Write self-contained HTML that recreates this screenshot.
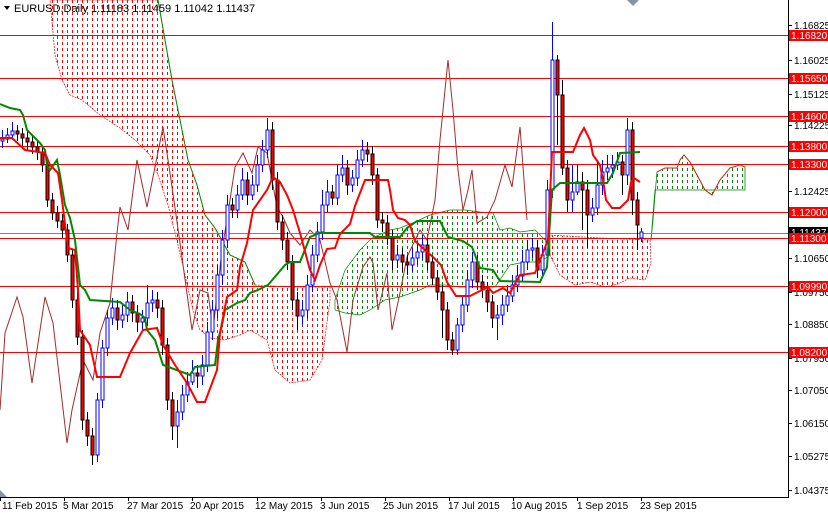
<!DOCTYPE html>
<html><head><meta charset="utf-8"><style>
html,body{margin:0;padding:0;background:#fff;}
body{width:828px;height:513px;overflow:hidden;position:relative;font-family:"Liberation Sans",sans-serif;}
svg{position:absolute;left:0;top:0;}
text{font-family:"Liberation Sans",sans-serif;}
</style></head><body>
<svg width="828" height="513" viewBox="0 0 828 513" xmlns="http://www.w3.org/2000/svg">
<defs>
<pattern id="pr" width="5" height="6" patternUnits="userSpaceOnUse"><rect x="2" y="0" width="1" height="3" fill="#f00"/></pattern>
<pattern id="pg" width="5" height="6" patternUnits="userSpaceOnUse"><rect x="2" y="0" width="1" height="3" fill="#080"/></pattern>
</defs>
<polygon fill="url(#pr)" stroke="#f00" stroke-width="0.7" stroke-dasharray="2,1" points="158,0 165,40 172,80 180,120 188,160 197,185 205,215 215,228 230,255 245,262 255,285 290,287 330,287 330,300 322,360 310,380 290,383 275,370 267,340 250,330 240,335 225,340 210,338 200,330 193,310 185,275 178,245 168,205 158,175 150,155 135,140 120,128 100,115 82,100 70,95 62,80 55,55 50,0"/>
<polyline fill="none" stroke="#080" stroke-width="1" points="158,0 165,40 172,80 180,120 188,160 197,185 205,215 215,228 230,255 245,262 255,285"/>
<polygon fill="url(#pg)" stroke="#080" stroke-width="0.7" points="335,300 345,270 360,250 372,238 390,230 400,228 415,222 430,215 450,210 465,210 480,212 493,213 500,230 510,228 520,232 535,230 545,240 550,235 550,255 540,262 525,262 510,265 495,287 480,287 460,287 445,285 430,285 420,290 400,297 385,300 370,310 360,315 345,313 335,310"/>
<polygon fill="url(#pr)" stroke="#f00" stroke-width="0.7" stroke-dasharray="2,1" points="548,235 600,238 650,240 651,262 648,272 645,280 630,278 618,284 605,287 590,282 575,285 560,275 550,255"/>
<polygon fill="url(#pg)" stroke="#080" stroke-width="0.8" points="651,240 653,220 655,195 657,172 665,168 677,168 680,160 684,155 690,162 697,175 705,190 712,195 720,180 730,168 740,165 745,167 745,190 705,190 655,190"/>
<polyline fill="none" stroke="#f00" stroke-width="0.8" points="657,172 665,168 677,168 680,160 684,155 690,162 697,175 705,190 712,195 720,180 730,168 740,165 745,167"/>
<polyline fill="none" stroke="#a52a2a" stroke-width="1" points="0,410 5,333 17,297 23,317 32,383 45,297 53,323 67,443 72,410 83,360 93,380 100,333 110,303 117,233 120,207 128,230 137,160 147,207 155,167 163,127 170,173 180,243 192,330 200,290 208,293 213,330 222,250 228,213 235,167 243,153 252,173 258,147 267,153 277,207 283,217 290,233 300,245 310,230 320,240 330,283 337,300 347,352 353,300 363,267 370,257 373,263 378,310 383,290 387,273 392,330 400,293 407,257 420,230 427,240 435,200 440,140 448,60 453,110 458,170 463,210 468,190 472,170 477,223 487,217 495,200 505,165 512,187 520,127 527,220"/>
<g stroke="#f00" stroke-width="1">
<line x1="0" y1="35.5" x2="788" y2="35.5"/><line x1="0" y1="78.5" x2="788" y2="78.5"/><line x1="0" y1="116.5" x2="788" y2="116.5"/><line x1="0" y1="146.5" x2="788" y2="146.5"/><line x1="0" y1="164.5" x2="788" y2="164.5"/><line x1="0" y1="212.5" x2="788" y2="212.5"/><line x1="0" y1="238.5" x2="788" y2="238.5"/><line x1="0" y1="286.5" x2="788" y2="286.5"/><line x1="0" y1="352.5" x2="788" y2="352.5"/>
</g>
<line x1="0" y1="233.5" x2="788" y2="233.5" stroke="#808080"/>
<!-- bear candles -->
<path fill="none" stroke="#000" d="M17.5 125V141M22.5 128V146M27.5 131V150M32.5 136V154M37.5 140V160M42.5 146V172M47.5 160V207M52.5 193V220M57.5 206V228M62.5 214V238M67.5 224V262M72.5 250V308M77.5 292V345M82.5 330V430M87.5 412V446M92.5 428V465M117.5 300V330M132.5 295V322M137.5 305V332M157.5 292V318M162.5 300V355M167.5 338V410M172.5 392V440M197.5 365V388M232.5 198V218M247.5 172V205M272.5 122V190M277.5 172V230M282.5 215V250M287.5 232V270M292.5 255V310M297.5 292V330M332.5 185V205M347.5 160V195M367.5 142V162M372.5 146V185M377.5 168V228M382.5 212V232M387.5 215V245M392.5 230V270M402.5 248V272M407.5 255V275M427.5 238V270M432.5 255V285M437.5 270V300M442.5 285V338M447.5 302V350M452.5 332V355M477.5 255V290M482.5 275V298M487.5 282V312M492.5 295V328M537.5 240V278M557.5 55V145M562.5 80V175M567.5 160V212M582.5 172V230M587.5 180V248M622.5 155V195M632.5 122V215M637.5 192V250"/>
<path fill="#f00" stroke="#000" d="M16 131h3V134h-3zM21 134h3V138h-3zM26 138h3V142h-3zM31 142h3V147h-3zM36 147h3V152h-3zM41 152h3V165h-3zM46 165h3V200h-3zM51 200h3V213h-3zM56 213h3V221h-3zM61 221h3V230h-3zM66 230h3V255h-3zM71 255h3V300h-3zM76 300h3V337h-3zM81 337h3V420h-3zM86 420h3V436h-3zM91 436h3V455h-3zM116 308h3V320h-3zM131 302h3V313h-3zM136 313h3V322h-3zM156 300h3V308h-3zM161 308h3V345h-3zM166 345h3V400h-3zM171 400h3V426h-3zM196 373h3V376h-3zM231 205h3V210h-3zM246 180h3V195h-3zM271 130h3V180h-3zM276 180h3V222h-3zM281 222h3V240h-3zM286 240h3V262h-3zM291 262h3V300h-3zM296 300h3V316h-3zM331 192h3V198h-3zM346 168h3V185h-3zM366 150h3V154h-3zM371 154h3V175h-3zM376 175h3V220h-3zM381 220h3V223h-3zM386 223h3V238h-3zM391 238h3V260h-3zM401 255h3V262h-3zM406 262h3V265h-3zM426 245h3V262h-3zM431 262h3V278h-3zM436 278h3V292h-3zM441 292h3V310h-3zM446 310h3V340h-3zM451 340h3V350h-3zM476 262h3V282h-3zM481 282h3V290h-3zM486 290h3V302h-3zM491 302h3V318h-3zM536 248h3V270h-3zM556 60h3V95h-3zM561 95h3V168h-3zM566 168h3V200h-3zM581 182h3V190h-3zM586 190h3V215h-3zM621 162h3V175h-3zM631 130h3V200h-3zM636 200h3V225h-3z"/>
<!-- bull candles -->
<path fill="none" stroke="#00f" d="M2.5 130V148M7.5 128V143M12.5 122V140M97.5 393V462M102.5 340V408M107.5 310V356M112.5 298V325M122.5 305V328M127.5 292V322M142.5 310V330M147.5 285V326M152.5 290V312M177.5 400V448M182.5 385V420M187.5 372V402M192.5 360V385M202.5 355V385M207.5 322V372M212.5 300V340M217.5 265V318M222.5 230V285M227.5 195V248M237.5 185V218M242.5 168V200M252.5 175V200M257.5 155V192M262.5 140V172M267.5 118V158M302.5 300V325M307.5 275V318M312.5 245V292M317.5 222V262M322.5 190V240M327.5 180V212M337.5 165V205M342.5 155V182M352.5 170V192M357.5 150V186M362.5 140V167M397.5 245V268M412.5 248V272M417.5 242V265M422.5 235V260M457.5 318V355M462.5 295V332M467.5 270V312M472.5 252V288M497.5 305V340M502.5 295V325M507.5 285V312M512.5 275V302M517.5 265V292M522.5 250V282M527.5 240V270M532.5 238V258M542.5 245V278M547.5 180V262M552.5 22V198M572.5 165V212M577.5 165V195M592.5 198V222M597.5 160V215M602.5 160V195M607.5 155V180M612.5 155V178M617.5 152V170M627.5 118V185M641.5 228V242"/>
<path fill="#fff" stroke="#00f" d="M1 139h3V141h-3zM6 135h3V139h-3zM11 131h3V135h-3zM96 400h3V455h-3zM101 348h3V400h-3zM106 318h3V348h-3zM111 308h3V318h-3zM121 315h3V320h-3zM126 302h3V315h-3zM141 318h3V322h-3zM146 303h3V318h-3zM151 300h3V303h-3zM176 412h3V426h-3zM181 395h3V412h-3zM186 382h3V395h-3zM191 373h3V382h-3zM201 365h3V376h-3zM206 332h3V365h-3zM211 310h3V332h-3zM216 275h3V310h-3zM221 240h3V275h-3zM226 205h3V240h-3zM236 195h3V210h-3zM241 180h3V195h-3zM251 185h3V195h-3zM256 165h3V185h-3zM261 150h3V165h-3zM266 130h3V150h-3zM301 310h3V316h-3zM306 285h3V310h-3zM311 255h3V285h-3zM316 232h3V255h-3zM321 205h3V232h-3zM326 192h3V205h-3zM336 175h3V198h-3zM341 168h3V175h-3zM351 178h3V185h-3zM356 160h3V178h-3zM361 150h3V160h-3zM396 255h3V260h-3zM411 258h3V265h-3zM416 252h3V258h-3zM421 245h3V252h-3zM456 325h3V350h-3zM461 305h3V325h-3zM466 280h3V305h-3zM471 262h3V280h-3zM496 315h3V318h-3zM501 305h3V315h-3zM506 296h3V305h-3zM511 285h3V296h-3zM516 276h3V285h-3zM521 262h3V276h-3zM526 250h3V262h-3zM531 248h3V250h-3zM541 255h3V270h-3zM546 190h3V255h-3zM551 60h3V190h-3zM571 192h3V200h-3zM576 182h3V192h-3zM591 208h3V215h-3zM596 185h3V208h-3zM601 172h3V185h-3zM606 168h3V172h-3zM611 165h3V168h-3zM616 162h3V165h-3zM626 130h3V175h-3zM640 232h3V238h-3z"/>
<polyline fill="none" stroke="#080" stroke-width="2" points="0,104 10,108 20,110 23,115 27,130 40,143 45,150 47,165 50,170 57,160 60,175 65,205 70,218 75,240 80,285 85,290 90,300 120,302 130,310 140,314 145,318 147,330 155,340 163,365 190,375 195,367 215,365 218,340 222,325 225,310 237,303 245,300 250,293 258,290 268,285 285,265 290,262 300,262 310,237 320,233 370,233 375,237 400,237 407,228 417,221 440,221 448,237 463,241 472,247 480,268 493,270 500,281 540,282 547,267 552,190 560,183 607,183 613,173 620,153 640,152"/>
<polyline fill="none" stroke="#f00" stroke-width="2" points="0,138 12,138 25,150 45,153 50,165 58,173 62,200 68,248 75,250 78,290 80,330 90,345 97,377 120,377 130,353 143,330 157,328 163,345 175,365 187,383 197,402 205,402 217,370 220,333 227,297 237,290 240,267 247,243 253,210 267,190 273,177 280,182 287,195 293,210 300,233 310,270 315,280 320,265 327,249 335,248 340,234 350,224 355,206 365,180 388,180 390,190 393,210 398,218 405,220 410,225 415,241 425,250 433,257 441,265 447,282 456,296 470,296 488,287 493,293 503,288 510,293 517,280 520,275 535,273 548,240 552,152 573,152 580,135 584,128 590,140 593,155 600,165 603,180 606,200 612,208 620,208 628,200 631,182 634,178 640,182"/>
<line x1="788.5" y1="0" x2="788.5" y2="497" stroke="#000"/>
<line x1="0" y1="497.5" x2="789" y2="497.5" stroke="#000"/>
<polygon points="0,490 0,497 7,497" fill="#8a94a0"/>
<polygon points="627,0 639,0 633,6" fill="#8a94a0"/>
<g font-size="10" fill="#000">
<path stroke="#000" d="M788 25.5h4M788 60.5h4M788 94.5h4M788 125.5h4M788 191.5h4M788 258.5h4M788 292.5h4M788 324.5h4M788 358.5h4M788 390.5h4M788 423.5h4M788 456.5h4M788 490.5h4"/>
<text x="794" y="29">1.16825</text><text x="794" y="64">1.16025</text><text x="794" y="98">1.15125</text><text x="794" y="129">1.14225</text><text x="794" y="195">1.12425</text><text x="794" y="262">1.10650</text><text x="794" y="296">1.09750</text><text x="794" y="328">1.08850</text><text x="794" y="362">1.07950</text><text x="794" y="394">1.07050</text><text x="794" y="427">1.06150</text><text x="794" y="460">1.05275</text><text x="794" y="494">1.04375</text>
<rect x="789" y="227" width="39" height="11" fill="#000"/><text x="791" y="236" fill="#fff">1.11437</text>
<g fill="#f00"><rect x="789" y="30" width="39" height="11"/><rect x="789" y="73" width="39" height="11"/><rect x="789" y="111" width="39" height="11"/><rect x="789" y="141" width="39" height="11"/><rect x="789" y="159" width="39" height="11"/><rect x="789" y="207" width="39" height="11"/><rect x="789" y="233" width="39" height="11"/><rect x="789" y="281" width="39" height="11"/><rect x="789" y="347" width="39" height="11"/></g>
<g fill="#fff"><text x="791" y="39">1.16820</text><text x="791" y="82">1.15650</text><text x="791" y="120">1.14600</text><text x="791" y="150">1.13800</text><text x="791" y="168">1.13300</text><text x="791" y="216">1.12000</text><text x="791" y="242">1.11300</text><text x="791" y="290">1.09990</text><text x="791" y="356">1.08200</text></g>
<path stroke="#000" d="M0.5 497v4M64.5 497v4M128.5 497v4M192.5 497v4M257.5 497v4M321.5 497v4M385.5 497v4M449.5 497v4M513.5 497v4M577.5 497v4M641.5 497v4"/>
<text x="2" y="509">11 Feb 2015</text><text x="63" y="509">5 Mar 2015</text><text x="127" y="509">27 Mar 2015</text><text x="190" y="509">20 Apr 2015</text><text x="255" y="509">12 May 2015</text><text x="320" y="509">3 Jun 2015</text><text x="383" y="509">25 Jun 2015</text><text x="448" y="509">17 Jul 2015</text><text x="511" y="509">10 Aug 2015</text><text x="577" y="509">1 Sep 2015</text><text x="640" y="509">23 Sep 2015</text>
</g>
<g font-size="11">
<polygon points="4,6 10,6 7,10" fill="#000"/>
<text x="14" y="12">EURUSD,Daily  1.11183 1.11459 1.11042 1.11437</text>
</g>
</svg>
</body></html>
